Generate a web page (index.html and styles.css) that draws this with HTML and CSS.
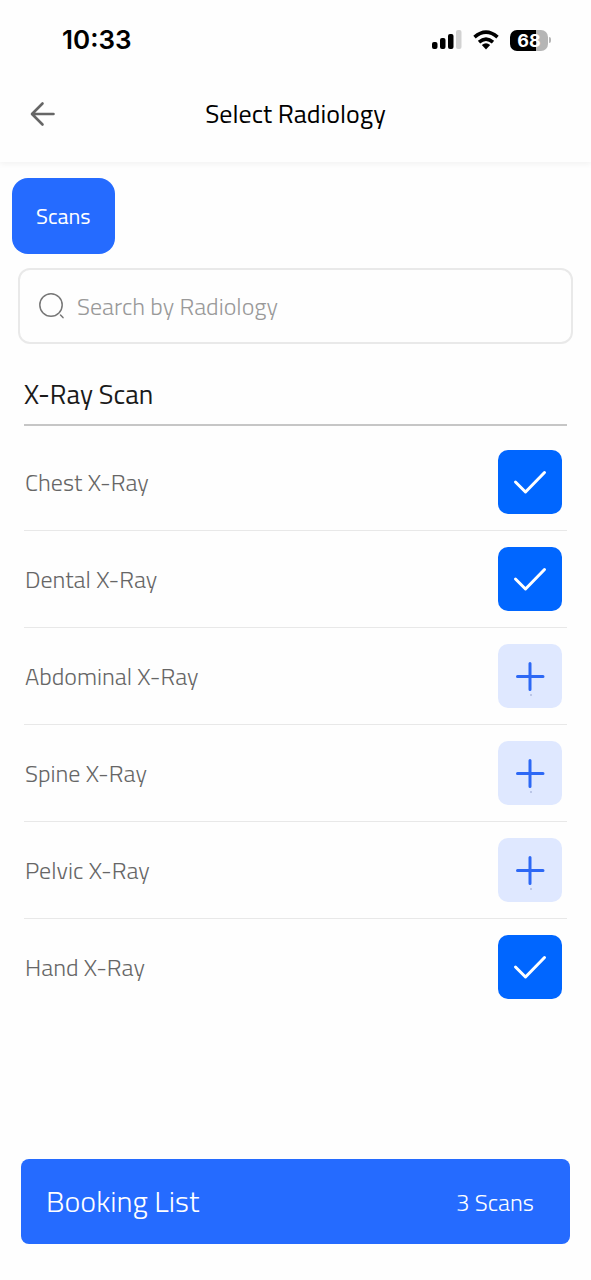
FILE: index.html
```html
<!DOCTYPE html>
<html lang="en">
<head>
<meta charset="utf-8">
<meta name="viewport" content="width=device-width, initial-scale=1">
<title>Select Radiology</title>
<link rel="stylesheet" href="styles.css">
</head>
<body>
<div class="screen">
  <header class="header">
    <div class="status">
      <time class="status-time">10:33</time>
      <div class="status-icons">
        <svg width="30" height="20" viewBox="0 0 30 20" aria-hidden="true">
          <rect x="0" y="12" width="5.500" height="7" rx="2"/>
          <rect x="8" y="8" width="5.500" height="11" rx="2"/>
          <rect x="16" y="4" width="5.500" height="15" rx="2"/>
          <rect x="24" y="0" width="5.500" height="19" rx="2" fill="#d2d2d2"/>
        </svg>
        <svg width="26" height="20" viewBox="0 0 26 20" aria-hidden="true">
          <path d="M1.500 7.200Q13-2.800 24.500 7.200M6 12.200Q13 6.200 20 12.200" fill="none" stroke="#000" stroke-width="3.600"/>
          <path d="M8.800 15Q13 11.600 17.200 15L13 19.500Z"/>
        </svg>
        <span class="battery"><span class="battery-body">68</span></span>
      </div>
    </div>
    <div class="nav">
      <button class="back" type="button" aria-label="Back">
        <svg width="26" height="26" viewBox="0 0 26 26" fill="none" stroke="#666" stroke-width="2.600" stroke-linecap="round" stroke-linejoin="round" aria-hidden="true"><path d="M13.500 2.500L3 13L13.500 23.500M3.500 13H24.500"/></svg>
      </button>
      <h1 class="title">Select Radiology</h1>
    </div>
  </header>

  <main class="main">
    <button class="tab" type="button">Scans</button>
    <label class="search">
      <svg width="26" height="26" viewBox="0 0 26 26" fill="none" stroke="#777" stroke-width="1.500" stroke-linecap="round" aria-hidden="true"><circle cx="12" cy="12" r="11.200"/><path d="M21.500 22L24 24.600"/></svg>
      <input class="search-input" type="search" placeholder="Search by Radiology" aria-label="Search by Radiology">
    </label>

    <section class="group">
      <h2 class="group-title">X-Ray Scan</h2>
      <ul class="list">
        <li class="row"><label class="name" for="chest">Chest X-Ray</label><span class="toggle"><input class="box" type="checkbox" id="chest" checked><svg class="mark" viewBox="0 0 64 64" aria-hidden="true"><path d="M17.500 32L27.500 42L46.500 22.500"/></svg></span></li>
        <li class="row"><label class="name" for="dental">Dental X-Ray</label><span class="toggle"><input class="box" type="checkbox" id="dental" checked><svg class="mark" viewBox="0 0 64 64" aria-hidden="true"><path d="M17.500 32L27.500 42L46.500 22.500"/></svg></span></li>
        <li class="row"><label class="name" for="abdominal">Abdominal X-Ray</label><span class="toggle"><input class="box" type="checkbox" id="abdominal"><svg class="mark mark-plus" viewBox="0 0 64 64" aria-hidden="true"><path d="M32 19.500V45.500M19.500 32.500H45"/><circle cx="33" cy="51" r=".8"/></svg></span></li>
        <li class="row"><label class="name" for="spine">Spine X-Ray</label><span class="toggle"><input class="box" type="checkbox" id="spine"><svg class="mark mark-plus" viewBox="0 0 64 64" aria-hidden="true"><path d="M32 19.500V45.500M19.500 32.500H45"/><circle cx="33" cy="51" r=".8"/></svg></span></li>
        <li class="row"><label class="name" for="pelvic">Pelvic X-Ray</label><span class="toggle"><input class="box" type="checkbox" id="pelvic"><svg class="mark mark-plus" viewBox="0 0 64 64" aria-hidden="true"><path d="M32 19.500V45.500M19.500 32.500H45"/><circle cx="33" cy="51" r=".8"/></svg></span></li>
        <li class="row"><label class="name" for="hand">Hand X-Ray</label><span class="toggle"><input class="box" type="checkbox" id="hand" checked><svg class="mark" viewBox="0 0 64 64" aria-hidden="true"><path d="M17.500 32L27.500 42L46.500 22.500"/></svg></span></li>
      </ul>
    </section>
  </main>

  <footer class="footer">
    <button class="booking" type="button"><span class="booking-title">Booking List</span><span class="booking-count">3 Scans</span></button>
  </footer>
</div>
</body>
</html>
```
FILE: styles.css
```css
* { box-sizing: border-box; }

body {
  margin: 0;
  background: #fefefe;
  color: #000;
  font-family: "Titillium Web", Cairo, "Open Sans", "Noto Sans", sans-serif;
}

button, input { font: inherit; }
button { border: 0; cursor: pointer; }

.screen {
  min-height: 100vh;
  display: flex;
  flex-direction: column;
}

.header {
  padding-bottom: 14px;
  box-shadow: 0 2px 6px rgba(0, 0, 0, .05);
}

.status {
  display: flex;
  justify-content: space-between;
  align-items: center;
  height: 80px;
  padding: 0 40px 0 62px;
}

.status-time {
  font: 600 26px/32px Inter, sans-serif;
}

.status-icons {
  display: flex;
  align-items: center;
  gap: 11px;
}

.battery {
  display: flex;
  align-items: center;
  gap: 1px;
}

.battery::after {
  content: "";
  width: 2px;
  height: 6px;
  border-radius: 0 2px 2px 0;
  background: #b5b5b5;
}

.battery-body {
  width: 38px;
  border-radius: 7px;
  background: linear-gradient(90deg, #000 68%, #b5b5b5 68%);
  color: #fff;
  font: 700 18px/21px Inter, sans-serif;
  text-align: center;
}

.nav {
  display: grid;
  grid-template-columns: 28px 1fr 28px;
  align-items: center;
  height: 68px;
  padding: 0 29px;
}

.back {
  display: flex;
  padding: 0;
  background: none;
}

.title {
  margin: 0;
  font-size: 26px;
  line-height: 36px;
  font-weight: 500;
  text-align: center;
}

.main {
  flex: 1;
  display: flex;
  flex-direction: column;
  padding-top: 16px;
}

.tab {
  align-self: flex-start;
  margin-left: 12px;
  padding: 24px;
  border-radius: 16px;
  background: #256bff;
  color: #fff;
  font-size: 22px;
  line-height: 28px;
  font-weight: 500;
}

.search {
  display: flex;
  align-items: center;
  gap: 12px;
  height: 76px;
  margin: 14px 18px 0;
  padding: 0 19px;
  border: 2px solid #e9e9e9;
  border-radius: 12px;
}

.search-input {
  flex: 1;
  min-width: 0;
  padding: 0;
  border: 0;
  outline: 0;
  background: none;
  font-size: 24px;
  font-weight: 300;
}

.search-input::placeholder { color: #999; }

.group { margin: 32px 24px 0; }

.group-title {
  margin: 0;
  padding-bottom: 12px;
  border-bottom: 2px solid #c6c6c6;
  color: #1a1a1a;
  font-size: 27px;
  line-height: 36px;
  font-weight: 500;
}

.list {
  margin: 0;
  padding: 8px 0 0;
  list-style: none;
}

.row {
  display: flex;
  align-items: center;
  justify-content: space-between;
  padding: 16px 5px 16px 1px;
}

.row + .row { border-top: 1px solid #e8e8e8; }

.name {
  color: #666;
  font-size: 24px;
  line-height: 32px;
  font-weight: 300;
}

.toggle { display: grid; }

.box, .mark {
  grid-area: 1 / 1;
  width: 64px;
  height: 64px;
  margin: 0;
}

.box {
  appearance: none;
  border-radius: 10px;
  background: #dfe8ff;
}

.box:checked { background: #0066ff; }

.mark {
  pointer-events: none;
  fill: none;
  stroke: #fff;
  stroke-width: 3;
  stroke-linecap: round;
  stroke-linejoin: round;
}

.mark-plus { stroke: #2d68f5; }

.mark-plus circle {
  fill: #8d9cc8;
  stroke: none;
}

.footer { padding: 24px 21px 36px; }

.booking {
  display: flex;
  align-items: center;
  justify-content: space-between;
  width: 100%;
  padding: 22px 36px 22px 25px;
  border-radius: 8px;
  background: #256bff;
  color: #fff;
  font-weight: 300;
}

.booking-title {
  font-size: 30px;
  line-height: 41px;
}

.booking-count {
  font-size: 24px;
  line-height: 32px;
}
```
